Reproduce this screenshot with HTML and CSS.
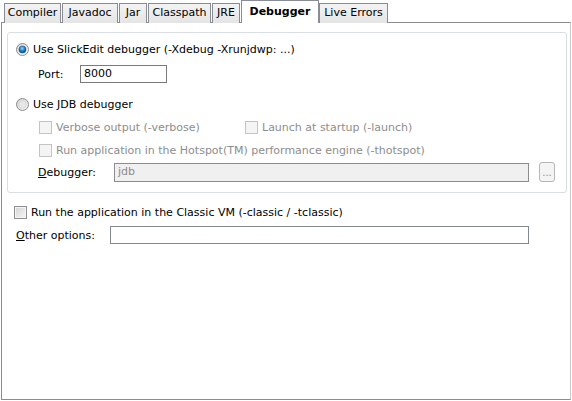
FILE: index.html
```html
<!DOCTYPE html>
<html>
<head>
<meta charset="utf-8">
<link rel="stylesheet" href="styles.css">
</head>
<body>
<div class="tabs">
  <div class="tab t-comp">Compiler</div>
  <div class="tab t-jdoc">Javadoc</div>
  <div class="tab t-jar">Jar</div>
  <div class="tab t-cp">Classpath</div>
  <div class="tab t-jre">JRE</div>
  <div class="tab sel">Debugger</div>
  <div class="tab t-live">Live Errors</div>
</div>
<div class="panel">
  <div class="group">
    <div class="row r1">
      <svg class="radio" width="13" height="13" viewBox="0 0 13 13">
        <defs>
          <radialGradient id="dot" cx="45%" cy="35%" r="60%">
            <stop offset="0" stop-color="#8fd6ff"/>
            <stop offset="0.6" stop-color="#1a7fc4"/>
            <stop offset="1" stop-color="#0a4a80"/>
          </radialGradient>
          <linearGradient id="rbg" x1="0" y1="0" x2="1" y2="1">
            <stop offset="0" stop-color="#d6d6d6"/>
            <stop offset="1" stop-color="#ffffff"/>
          </linearGradient>
        </defs>
        <circle cx="6.5" cy="6.5" r="6" fill="url(#rbg)" stroke="#8a8a8a"/>
        <circle cx="6.5" cy="6.5" r="3.6" fill="url(#dot)" stroke="#2a5a8a" stroke-width="0.6"/>
      </svg>
      <span>Use SlickEdit debugger (-Xdebug -Xrunjdwp: ...)</span>
    </div>
    <div class="row port">
      <span class="plabel">Port:</span>
      <div class="input pinput">8000</div>
    </div>
    <div class="row r2">
      <svg class="radio" width="13" height="13" viewBox="0 0 13 13">
        <defs>
          <linearGradient id="rbg2" x1="0" y1="0" x2="1" y2="1">
            <stop offset="0" stop-color="#cfcfcf"/>
            <stop offset="1" stop-color="#fafafa"/>
          </linearGradient>
        </defs>
        <circle cx="6.5" cy="6.5" r="6" fill="url(#rbg2)" stroke="#8a8a8a"/>
        <circle cx="6.5" cy="6.5" r="3.8" fill="#e6e6e6" stroke="#d0d0d0" stroke-width="0.6"/>
      </svg>
      <span>Use JDB debugger</span>
    </div>
    <div class="row chk c1">
      <div class="citem w1"><span class="cb dis"></span><span class="dtext">Verbose output (-verbose)</span></div>
      <div class="citem"><span class="cb dis"></span><span class="dtext">Launch at startup (-launch)</span></div>
    </div>
    <div class="row chk c2">
      <div class="citem"><span class="cb dis"></span><span class="dtext">Run application in the Hotspot(TM) performance engine (-thotspot)</span></div>
    </div>
    <div class="row dbg">
      <span class="dlabel"><u>D</u>ebugger:</span>
      <div class="input dinput">jdb</div>
      <div class="btn">...</div>
    </div>
  </div>
  <div class="row classic">
    <span class="cb en"></span><span>Run the application in the Classic VM (-classic / -tclassic)</span>
  </div>
  <div class="row other">
    <span class="olabel"><u>O</u>ther options:</span>
    <div class="input oinput"></div>
  </div>
</div>
</body>
</html>
```
FILE: styles.css
```css
html, body {
  margin: 0;
  padding: 0;
  background: #ffffff;
}
body {
  font-family: "DejaVu Sans", sans-serif;
  font-size: 11px;
  color: #000;
  width: 572px;
  height: 401px;
  overflow: hidden;
}
.tabs {
  display: flex;
  align-items: flex-end;
  height: 23px;
  padding-left: 4px;
  margin-bottom: -1px;
}
.tab {
  box-sizing: border-box;
  height: 20px;
  line-height: 18px;
  padding: 0;
  text-align: center;
  white-space: nowrap;
  border: 1px solid #898c95;
  border-bottom: none;
  background: linear-gradient(#f3f3f3, #e4e4e4);
  margin-right: 1px;
}
.t-comp { width: 57px; }
.t-jdoc { width: 56px; }
.t-jar { width: 28px; }
.t-cp { width: 63px; }
.t-jre { width: 28px; }
.t-live { width: 69px; }
.tab.sel {
  position: relative;
  z-index: 1;
  width: 78px;
  height: 23px;
  line-height: 22px;
  background: #fff;
  font-weight: bold;
  margin-right: 0;
}
.panel {
  margin-left: 1px;
  width: 568px;
  height: 376px;
  border: 1px solid #898c95;
  border-right-color: #c8cacf;
}
.group {
  margin: 9px 3px 0 5px;
  border: 1px solid #d9dee2;
  border-radius: 3px;
  padding: 7px 0 9px 8px;
  height: 143px;
}
.row {
  display: flex;
  align-items: center;
  height: 18px;
  white-space: nowrap;
}
.radio {
  margin-right: 4px;
  flex: none;
}
.port {
  margin-top: 7px;
  padding-left: 22px;
}
.plabel {
  width: 42px;
}
.input {
  box-sizing: border-box;
  border: 1px solid #7a7a7a;
  height: 18px;
  line-height: 16px;
  padding-left: 3px;
  background: #fff;
}
.pinput {
  width: 87px;
}
.r2 {
  margin-top: 12px;
}
.chk {
  padding-left: 23px;
  margin-top: 5px;
}
.citem {
  display: flex;
  align-items: center;
}
.w1 {
  width: 206px;
}
.cb {
  box-sizing: border-box;
  width: 13px;
  height: 13px;
  margin-right: 4px;
  flex: none;
}
.cb.dis {
  border: 1px solid #c4c4c4;
  background: #f4f4f4;
}
.cb.en {
  border: 1px solid #8e8f8f;
  background: linear-gradient(135deg, #d4d4d4, #f6f6f6);
  box-shadow: inset 0 0 0 1px #f4f4f4;
}
.dtext {
  color: #8d8d8d;
}
.dbg {
  margin-top: 3px;
  height: 20px;
  padding-left: 22px;
}
.dlabel {
  width: 76px;
}
.dinput {
  width: 415px;
  height: 19px;
  background: #f0f0f0;
  color: #8d8d8d;
  border-color: #8c8c8c;
}
.btn {
  box-sizing: border-box;
  margin-left: 10px;
  width: 16px;
  height: 20px;
  border: 1px solid #b5b5b5;
  border-radius: 3px;
  background: #f4f4f4;
  color: #8d8d8d;
  font-size: 10px;
  line-height: 20px;
  text-align: center;
}
.classic {
  margin-top: 10px;
  padding-left: 12px;
}
.other {
  margin-top: 5px;
  padding-left: 14px;
}
.olabel {
  width: 94px;
}
.oinput {
  width: 419px;
  border-color: #828790;
}
```
